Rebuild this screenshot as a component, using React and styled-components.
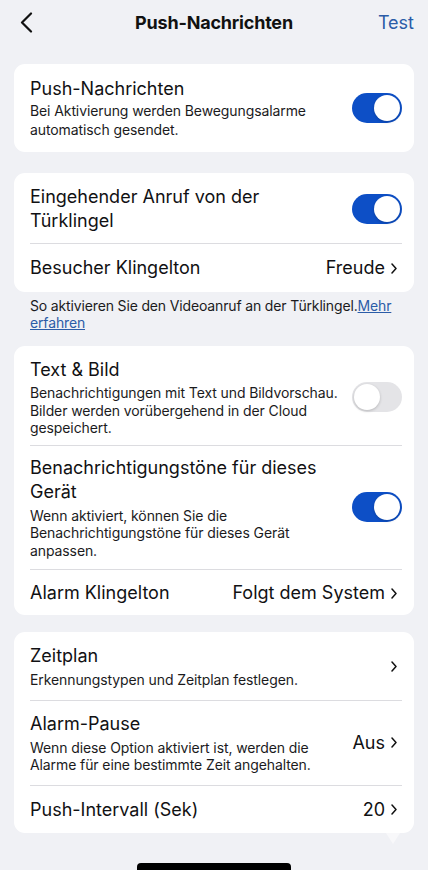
import React from "react";
import styled, { createGlobalStyle } from "styled-components";

const Global = createGlobalStyle`
  html, body { margin: 0; padding: 0; background: #f0f1f5; }
  body { font-family: Inter, "Noto Sans", "Liberation Sans", sans-serif; color: #111113; -webkit-font-smoothing: antialiased; }
  * { box-sizing: border-box; }
`;

const Page = styled.div`
  width: 428px;
  height: 870px;
  overflow: hidden;
  display: flex;
  flex-direction: column;
  padding: 0 14px;
`;

const Header = styled.header`
  height: 44px;
  display: grid;
  grid-template-columns: 60px 1fr 60px;
  align-items: center;
  margin-bottom: 20px;
`;

const BackBtn = styled.button`
  border: 0;
  background: none;
  padding: 0 0 0 6px;
  display: flex;
  align-items: center;
  height: 44px;
  cursor: pointer;
`;

const Title = styled.h1`
  margin: 0;
  text-align: center;
  font-size: 18px;
  font-weight: 700;
  letter-spacing: -0.2px;
  color: #111;
`;

const TestLink = styled.span`
  text-align: right;
  font-size: 18px;
  color: #2b5ca7;
`;

const Card = styled.section`
  position: relative;
  background: #fff;
  border-radius: 11px;
  margin-bottom: ${(p) => p.$mb || 0}px;
  ${(p) =>
    p.$tail &&
    `&::after {
      content: "";
      position: absolute;
      right: 14px;
      bottom: -11px;
      border-left: 7px solid transparent;
      border-right: 7px solid transparent;
      border-top: 11px solid #f8f8fa;
    }`}
`;

const Row = styled.div`
  display: flex;
  align-items: center;
  justify-content: space-between;
  gap: 10px;
  padding: ${(p) => (p.$pad ? p.$pad : "11px 12px 11px 16px")};
`;

const Divider = styled.div`
  height: 1px;
  background: #dcdce0;
  margin: 0 12px 0 16px;
`;

const TextCol = styled.div`
  flex: 1;
  min-width: 0;
  max-width: 312px;
`;

const RowTitle = styled.div`
  font-size: 18px;
  line-height: 24px;
  color: #111113;
`;

const Desc = styled.div`
  margin-top: ${(p) => (p.$mt != null ? p.$mt : 3)}px;
  font-size: 14px;
  letter-spacing: -0.1px;
  line-height: ${(p) => (p.$loose ? 19 : 17.5)}px;
  color: #1b1b1d;
`;

const Value = styled.div`
  display: flex;
  align-items: center;
  gap: 6px;
  padding-right: 5px;
  font-size: 18px;
  line-height: 24px;
  color: #111113;
  white-space: nowrap;
  flex-shrink: 0;
`;

const Track = styled.div`
  width: 50px;
  height: 30px;
  border-radius: 15px;
  flex-shrink: 0;
  background: ${(p) => (p.$on ? "#0d4fc6" : "#e4e4e7")};
  display: flex;
  align-items: center;
  justify-content: ${(p) => (p.$on ? "flex-end" : "flex-start")};
  padding: 2px;
`;

const Knob = styled.div`
  width: 26px;
  height: 26px;
  border-radius: 50%;
  background: #fff;
  box-shadow: 0 1px 3px rgba(0, 0, 0, 0.2);
`;

const Footnote = styled.p`
  margin: 5px 0 15px;
  padding: 0 8px 0 16px;
  font-size: 14px;
  letter-spacing: -0.15px;
  line-height: 17px;
  color: #1b1b1d;
`;

const MoreLink = styled.a`
  color: #2b5ca7;
  text-decoration: underline;
`;

const HomeBar = styled.div`
  margin: auto auto 0;
  width: 154px;
  height: 7px;
  border-radius: 4px 4px 0 0;
  background: #000;
`;

const Toggle = ({ on }) => (
  <Track $on={on}>
    <Knob />
  </Track>
);

const Chevron = () => (
  <svg width="6" height="11" viewBox="0 0 6 11" fill="none">
    <path d="M1 1l4 4.5L1 10" stroke="#111" strokeWidth="1.5" strokeLinecap="round" strokeLinejoin="round" />
  </svg>
);

export default function App() {
  return (
    <>
      <Global />
      <Page>
        <Header>
          <BackBtn aria-label="Zurück">
            <svg width="13" height="21" viewBox="0 0 13 21" fill="none">
              <path d="M11 1.5L2 10.5l9 9" stroke="#111" strokeWidth="2.2" strokeLinecap="round" strokeLinejoin="round" />
            </svg>
          </BackBtn>
          <Title>Push-Nachrichten</Title>
          <TestLink>Test</TestLink>
        </Header>

        <Card $mb={21}>
          <Row $pad="13px 12px 13px 16px">
            <TextCol>
              <RowTitle>Push-Nachrichten</RowTitle>
              <Desc $loose $mt={0}>
                Bei Aktivierung werden Bewegungsalarme automatisch gesendet.
              </Desc>
            </TextCol>
            <Toggle on />
          </Row>
        </Card>

        <Card>
          <Row $pad="12px 12px 10px 16px">
            <TextCol>
              <RowTitle>Eingehender Anruf von der Türklingel</RowTitle>
            </TextCol>
            <Toggle on />
          </Row>
          <Divider />
          <Row $pad="12px 12px 12px 16px">
            <RowTitle>Besucher Klingelton</RowTitle>
            <Value>
              Freude <Chevron />
            </Value>
          </Row>
        </Card>
        <Footnote>
          So aktivieren Sie den Videoanruf an der Türklingel.<MoreLink>Mehr erfahren</MoreLink>
        </Footnote>

        <Card $mb={17}>
          <Row $pad="12px 12px 8px 16px">
            <TextCol>
              <RowTitle>Text &amp; Bild</RowTitle>
              <Desc $mt={2}>
                Benachrichtigungen mit Text und Bildvorschau. Bilder werden vorübergehend in der Cloud gespeichert.
              </Desc>
            </TextCol>
            <Toggle />
          </Row>
          <Divider />
          <Row $pad="10px 12px 10px 16px">
            <TextCol>
              <RowTitle>Benachrichtigungstöne für dieses Gerät</RowTitle>
              <Desc>Wenn aktiviert, können Sie die Benachrichtigungstöne für dieses Gerät anpassen.</Desc>
            </TextCol>
            <Toggle on />
          </Row>
          <Divider />
          <Row $pad="11px 12px 10px 16px">
            <RowTitle>Alarm Klingelton</RowTitle>
            <Value>
              Folgt dem System <Chevron />
            </Value>
          </Row>
        </Card>

        <Card $tail>
          <Row $pad="12px 12px 11px 16px">
            <TextCol>
              <RowTitle>Zeitplan</RowTitle>
              <Desc>Erkennungstypen und Zeitplan festlegen.</Desc>
            </TextCol>
            <Value>
              <Chevron />
            </Value>
          </Row>
          <Divider />
          <Row $pad="11px 12px 11px 16px">
            <TextCol>
              <RowTitle>Alarm-Pause</RowTitle>
              <Desc>Wenn diese Option aktiviert ist, werden die Alarme für eine bestimmte Zeit angehalten.</Desc>
            </TextCol>
            <Value>
              Aus <Chevron />
            </Value>
          </Row>
          <Divider />
          <Row $pad="12px 12px 11px 16px">
            <RowTitle>Push-Intervall (Sek)</RowTitle>
            <Value>
              20 <Chevron />
            </Value>
          </Row>
        </Card>

        <HomeBar />
      </Page>
    </>
  );
}
